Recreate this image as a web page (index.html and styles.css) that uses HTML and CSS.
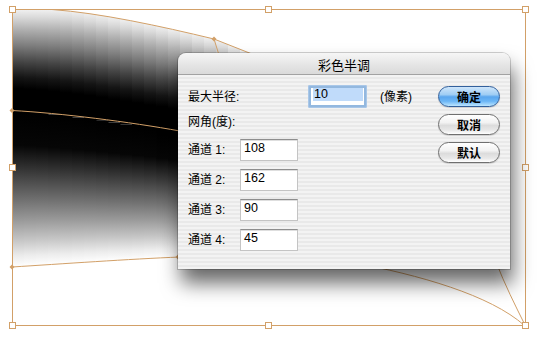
FILE: index.html
```html
<!DOCTYPE html>
<html lang="zh">
<head>
<meta charset="utf-8">
<title>彩色半调</title>
<link rel="stylesheet" href="styles.css">
</head>
<body>
<div class="stage">
  <svg class="art" width="539" height="340" viewBox="0 0 539 340">
    <defs>
      <linearGradient id="gt" x1="0" y1="0" x2="0" y2="1">
        <stop offset="0" stop-color="#f2f2f2"/>
        <stop offset="0.08" stop-color="#dadada"/>
        <stop offset="0.2" stop-color="#b0b0b0"/>
        <stop offset="0.36" stop-color="#7c7c7c"/>
        <stop offset="0.52" stop-color="#444444"/>
        <stop offset="0.67" stop-color="#151515"/>
        <stop offset="0.78" stop-color="#000000"/>
        <stop offset="1" stop-color="#000000"/>
      </linearGradient>
      <linearGradient id="gb" x1="0" y1="0" x2="0" y2="1">
        <stop offset="0" stop-color="#000000"/>
        <stop offset="0.22" stop-color="#060606"/>
        <stop offset="0.36" stop-color="#303030"/>
        <stop offset="0.45" stop-color="#4c4c4c"/>
        <stop offset="0.57" stop-color="#707070"/>
        <stop offset="0.7" stop-color="#999999"/>
        <stop offset="0.83" stop-color="#c6c6c6"/>
        <stop offset="0.93" stop-color="#ececec"/>
        <stop offset="1" stop-color="#ffffff"/>
      </linearGradient>
      <clipPath id="shape">
        <path d="M12,9 L52,9 C100,13 160,26 214,39 L252,54 L252,256 L178,257 C120,260 60,264 12,267 Z"/>
      </clipPath>
    </defs>
    <g clip-path="url(#shape)">
      <rect x="12" y="9" width="12.5" height="102" fill="url(#gt)"/>
      <rect x="12" y="111" width="12.5" height="156" fill="url(#gb)"/>
      <rect x="24" y="9" width="12.5" height="103" fill="url(#gt)"/>
      <rect x="24" y="112" width="12.5" height="154" fill="url(#gb)"/>
      <rect x="36" y="9" width="12.5" height="104" fill="url(#gt)"/>
      <rect x="36" y="113" width="12.5" height="152.2" fill="url(#gb)"/>
      <rect x="48" y="9" width="12.5" height="105.5" fill="url(#gt)"/>
      <rect x="48" y="114.5" width="12.5" height="150" fill="url(#gb)"/>
      <rect x="60" y="9.7" width="12.5" height="106.3" fill="url(#gt)"/>
      <rect x="60" y="116" width="12.5" height="147.8" fill="url(#gb)"/>
      <rect x="72" y="11" width="12.5" height="106.5" fill="url(#gt)"/>
      <rect x="72" y="117.5" width="12.5" height="145.5" fill="url(#gb)"/>
      <rect x="84" y="12.6" width="12.5" height="106.4" fill="url(#gt)"/>
      <rect x="84" y="119" width="12.5" height="143.3" fill="url(#gb)"/>
      <rect x="96" y="14.5" width="12.5" height="106.3" fill="url(#gt)"/>
      <rect x="96" y="120.8" width="12.5" height="140.8" fill="url(#gb)"/>
      <rect x="108" y="16.5" width="12.5" height="106" fill="url(#gt)"/>
      <rect x="108" y="122.5" width="12.5" height="138.4" fill="url(#gb)"/>
      <rect x="120" y="18.6" width="12.5" height="105.7" fill="url(#gt)"/>
      <rect x="120" y="124.3" width="12.5" height="135.9" fill="url(#gb)"/>
      <rect x="132" y="21" width="12.5" height="105" fill="url(#gt)"/>
      <rect x="132" y="126" width="12.5" height="133.5" fill="url(#gb)"/>
      <rect x="144" y="23.4" width="12.5" height="104.6" fill="url(#gt)"/>
      <rect x="144" y="128" width="12.5" height="130.7" fill="url(#gb)"/>
      <rect x="156" y="25.8" width="12.5" height="104.2" fill="url(#gt)"/>
      <rect x="156" y="130" width="12.5" height="128" fill="url(#gb)"/>
      <rect x="168" y="28.3" width="12.5" height="103.7" fill="url(#gt)"/>
      <rect x="168" y="132" width="12.5" height="125.3" fill="url(#gb)"/>
      <rect x="180" y="31" width="12.5" height="103" fill="url(#gt)"/>
      <rect x="180" y="134" width="12.5" height="123" fill="url(#gb)"/>
      <rect x="192" y="34" width="12.5" height="102" fill="url(#gt)"/>
      <rect x="192" y="136" width="12.5" height="121" fill="url(#gb)"/>
      <rect x="204" y="36.8" width="12.5" height="101.2" fill="url(#gt)"/>
      <rect x="204" y="138" width="12.5" height="119" fill="url(#gb)"/>
      <rect x="216" y="39.8" width="12.5" height="100.2" fill="url(#gt)"/>
      <rect x="216" y="140" width="12.5" height="117" fill="url(#gb)"/>
      <rect x="228" y="44.5" width="12.5" height="97.5" fill="url(#gt)"/>
      <rect x="228" y="142" width="12.5" height="115" fill="url(#gb)"/>
      <rect x="240" y="49.3" width="12.5" height="94.7" fill="url(#gt)"/>
      <rect x="240" y="144" width="12.5" height="113" fill="url(#gb)"/>
    </g>
    <g class="lines">
      <rect x="12.5" y="9.5" width="513" height="316"/>
      <path d="M12.5,9.5 L52,9.5 C100,13 160,26 214,39 L252,54"/>
      <path d="M214,39 L219,55"/>
      <path d="M12,110.5 C60,113 130,122 180,131"/>
      <path d="M12,267 C60,264 130,259 180,257"/>
      <path d="M350,262 C420,275 490,295 524.5,325.5"/>
      <path d="M496,262 C505,285 515,305 525,325"/>
    </g>
    <g class="dots">
      <path d="M214,36.5 L216.5,39 L214,41.5 L211.5,39 Z"/>
      <path d="M12,108 L14.5,110.5 L12,113 L9.5,110.5 Z"/>
      <path d="M12,264.5 L14.5,267 L12,269.5 L9.5,267 Z"/>
      <path d="M178,254.5 L180.5,257 L178,259.5 L175.5,257 Z"/>
    </g>
    <g class="handles">
      <rect x="9.5" y="6.5" width="6" height="6"/>
      <rect x="265.5" y="6.5" width="6" height="6"/>
      <rect x="522.5" y="6.5" width="6" height="6"/>
      <rect x="9.5" y="164.5" width="6" height="6"/>
      <rect x="522.5" y="164.5" width="6" height="6"/>
      <rect x="9.5" y="322.5" width="6" height="6"/>
      <rect x="265.5" y="322.5" width="6" height="6"/>
      <rect x="522.5" y="322.5" width="6" height="6"/>
    </g>
  </svg>

  <div class="dialog">
    <div class="titlebar">彩色半调</div>
    <div class="content">
      <div class="form">
        <div class="row radius">
          <span class="label wide">最大半径:</span>
          <span class="focus"><span class="inner"><span class="sel">10</span></span></span>
          <span class="unit">(像素)</span>
        </div>
        <div class="row angle"><span class="label">网角(度):</span></div>
        <div class="channels">
          <div class="row"><span class="label ch">通道 1:</span><span class="field">108</span></div>
          <div class="row"><span class="label ch">通道 2:</span><span class="field">162</span></div>
          <div class="row"><span class="label ch">通道 3:</span><span class="field">90</span></div>
          <div class="row"><span class="label ch">通道 4:</span><span class="field">45</span></div>
        </div>
      </div>
      <div class="buttons">
        <button class="btn primary">确定</button>
        <button class="btn">取消</button>
        <button class="btn">默认</button>
      </div>
    </div>
  </div>
</div>
</body>
</html>
```

FILE: styles.css
```css
html, body {
  margin: 0;
  padding: 0;
  background: #ffffff;
}

.stage {
  position: relative;
  width: 539px;
  height: 340px;
  overflow: hidden;
  font-family: "Liberation Sans", "Noto Sans CJK SC", sans-serif;
  color: #000;
}

.art {
  position: absolute;
  left: 0;
  top: 0;
}

.lines rect,
.lines path {
  fill: none;
  stroke: #d2a068;
  stroke-width: 1;
}

.dots path {
  fill: #d2a068;
}

.handles rect {
  fill: #ffffff;
  stroke: #d2a068;
  stroke-width: 1;
}

.dialog {
  position: absolute;
  left: 178px;
  top: 53px;
  width: 332px;
  height: 216px;
  border-radius: 8px 8px 0 0;
  box-shadow: 0 0 0 1px rgba(0, 0, 0, 0.18), 3px 14px 20px rgba(0, 0, 0, 0.6);
  display: flex;
  flex-direction: column;
  overflow: hidden;
}

.titlebar {
  height: 21px;
  flex: none;
  border-bottom: 1px solid #a2a2a2;
  background: linear-gradient(#f6f6f6, #e4e4e4 60%, #dadada);
  text-align: center;
  font-size: 13px;
  line-height: 23px;
  font-family: "Noto Sans CJK SC", sans-serif;
}

.content {
  flex: 1;
  display: flex;
  padding: 10px 0 0 10px;
  background: repeating-linear-gradient(#f3f3f3 0 2px, #e9e9e9 2px 4px);
}

.form {
  width: 250px;
  display: flex;
  flex-direction: column;
}

.row {
  display: flex;
  align-items: center;
}

.label {
  font-size: 12px;
  line-height: 14px;
}

.label.wide {
  width: 120px;
}

.label.ch {
  width: 52px;
}

.radius {
  height: 23px;
}

.focus {
  box-sizing: border-box;
  width: 59px;
  height: 23px;
  padding: 3px;
  border-radius: 2px;
  background: #93b8df;
  box-shadow: inset 0 0 0 1px #a9c7e8;
}

.inner {
  display: block;
  height: 17px;
  background: #ffffff;
  padding: 0 1px 0 2px;
}

.sel {
  display: block;
  height: 13px;
  background: #c0dbfa;
  font-size: 12.5px;
  line-height: 13px;
  padding-left: 1px;
}

.unit {
  margin-left: 13px;
  font-size: 12px;
  line-height: 14px;
}

.angle {
  margin-top: 4px;
  height: 20px;
}

.channels {
  margin-top: 7px;
  display: flex;
  flex-direction: column;
  gap: 8px;
}

.field {
  box-sizing: border-box;
  width: 58px;
  height: 22px;
  background: #ffffff;
  border: 1px solid #c4c4c4;
  border-top-color: #8e8e8e;
  box-shadow: inset 0 1px 0 #dedede;
  padding: 1px 0 0 3px;
  font-size: 12.5px;
  line-height: 14px;
}

.buttons {
  display: flex;
  flex-direction: column;
  gap: 7px;
  padding-top: 1px;
}

.btn {
  box-sizing: border-box;
  width: 62px;
  height: 21px;
  padding: 0;
  border-radius: 11px;
  border: 1px solid #6f6f6f;
  background: linear-gradient(#ffffff 0%, #f2f2f2 40%, #dcdcdc 55%, #e8e8e8 80%, #ffffff 100%);
  box-shadow: 0 1px 1px rgba(0, 0, 0, 0.15);
  font-family: "Noto Sans CJK SC", sans-serif;
  font-weight: bold;
  font-size: 12px;
  line-height: 19px;
  color: #000;
}

.btn.primary {
  border-color: #32609c;
  background: linear-gradient(#cfe6fb 0%, #9fcdf4 40%, #5aa6ee 52%, #6cb6f6 75%, #bde6ff 100%);
}
```
